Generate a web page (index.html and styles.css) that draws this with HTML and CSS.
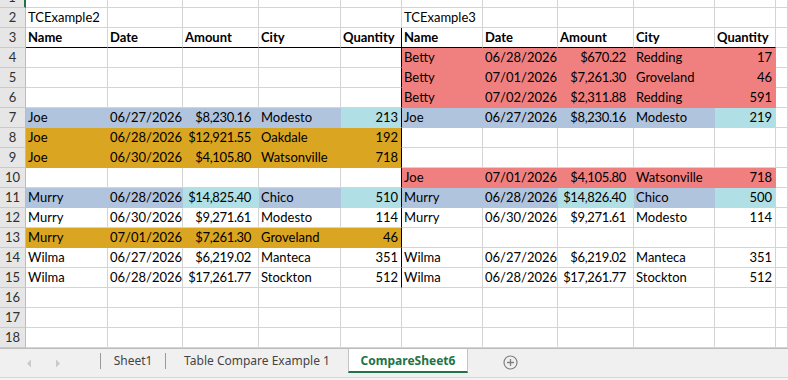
FILE: index.html
```html
<!DOCTYPE html>
<html lang="en">
<head>
  <meta charset="UTF-8" />
  <title>CompareSheet6</title>
  <link rel="stylesheet" href="styles.css">
</head>
<body>
  <div class="sheet">
    <div class="row"><div class="rh sel">1</div><div class="c"></div><div class="c"></div><div class="c"></div><div class="c"></div><div class="c"></div><div class="c"></div><div class="c"></div><div class="c"></div><div class="c"></div><div class="c"></div><div class="c"></div></div>
    <div class="row"><div class="rh">2</div><div class="c">TCExample2</div><div class="c"></div><div class="c"></div><div class="c"></div><div class="c"></div><div class="c">TCExample3</div><div class="c"></div><div class="c"></div><div class="c"></div><div class="c"></div><div class="c"></div></div>
    <div class="row"><div class="rh">3</div><div class="c hd">Name</div><div class="c hd">Date</div><div class="c hd">Amount</div><div class="c hd">City</div><div class="c hd edge">Quantity</div><div class="c hd">Name</div><div class="c hd">Date</div><div class="c hd">Amount</div><div class="c hd">City</div><div class="c hd">Quantity</div><div class="c"></div></div>

    <div class="row"><div class="rh">4</div><div class="c"></div><div class="c"></div><div class="c"></div><div class="c"></div><div class="c edge"></div>
      <div class="c rd">Betty</div><div class="c d rd">06/28/2026</div><div class="c m rd">$670.22</div><div class="c rd">Redding</div><div class="c n rd">17</div><div class="c"></div></div>
    <div class="row"><div class="rh">5</div><div class="c"></div><div class="c"></div><div class="c"></div><div class="c"></div><div class="c edge"></div>
      <div class="c rd">Betty</div><div class="c d rd">07/01/2026</div><div class="c m rd">$7,261.30</div><div class="c rd">Groveland</div><div class="c n rd">46</div><div class="c"></div></div>
    <div class="row"><div class="rh">6</div><div class="c"></div><div class="c"></div><div class="c"></div><div class="c"></div><div class="c edge"></div>
      <div class="c rd">Betty</div><div class="c d rd">07/02/2026</div><div class="c m rd">$2,311.88</div><div class="c rd">Redding</div><div class="c n rd">591</div><div class="c"></div></div>
    <div class="row"><div class="rh">7</div><div class="c bl">Joe</div><div class="c d bl">06/27/2026</div><div class="c m bl">$8,230.16</div><div class="c bl">Modesto</div><div class="c n cy edge">213</div>
      <div class="c bl">Joe</div><div class="c d bl">06/27/2026</div><div class="c m bl">$8,230.16</div><div class="c bl">Modesto</div><div class="c n cy">219</div><div class="c"></div></div>
    <div class="row"><div class="rh">8</div><div class="c go">Joe</div><div class="c d go">06/28/2026</div><div class="c m go">$12,921.55</div><div class="c go">Oakdale</div><div class="c n go edge">192</div>
      <div class="c"></div><div class="c"></div><div class="c"></div><div class="c"></div><div class="c"></div><div class="c"></div></div>
    <div class="row"><div class="rh">9</div><div class="c go">Joe</div><div class="c d go">06/30/2026</div><div class="c m go">$4,105.80</div><div class="c go">Watsonville</div><div class="c n go edge">718</div>
      <div class="c"></div><div class="c"></div><div class="c"></div><div class="c"></div><div class="c"></div><div class="c"></div></div>
    <div class="row"><div class="rh">10</div><div class="c"></div><div class="c"></div><div class="c"></div><div class="c"></div><div class="c edge"></div>
      <div class="c rd">Joe</div><div class="c d rd">07/01/2026</div><div class="c m rd">$4,105.80</div><div class="c rd">Watsonville</div><div class="c n rd">718</div><div class="c"></div></div>
    <div class="row"><div class="rh">11</div><div class="c bl">Murry</div><div class="c d bl">06/28/2026</div><div class="c m cy">$14,825.40</div><div class="c bl">Chico</div><div class="c n cy edge">510</div>
      <div class="c bl">Murry</div><div class="c d bl">06/28/2026</div><div class="c m cy">$14,826.40</div><div class="c bl">Chico</div><div class="c n cy">500</div><div class="c"></div></div>
    <div class="row"><div class="rh">12</div><div class="c">Murry</div><div class="c d">06/30/2026</div><div class="c m">$9,271.61</div><div class="c">Modesto</div><div class="c n edge">114</div>
      <div class="c">Murry</div><div class="c d">06/30/2026</div><div class="c m">$9,271.61</div><div class="c">Modesto</div><div class="c n">114</div><div class="c"></div></div>
    <div class="row"><div class="rh">13</div><div class="c go">Murry</div><div class="c d go">07/01/2026</div><div class="c m go">$7,261.30</div><div class="c go">Groveland</div><div class="c n go edge">46</div>
      <div class="c"></div><div class="c"></div><div class="c"></div><div class="c"></div><div class="c"></div><div class="c"></div></div>
    <div class="row"><div class="rh">14</div><div class="c">Wilma</div><div class="c d">06/27/2026</div><div class="c m">$6,219.02</div><div class="c">Manteca</div><div class="c n edge">351</div>
      <div class="c">Wilma</div><div class="c d">06/27/2026</div><div class="c m">$6,219.02</div><div class="c">Manteca</div><div class="c n">351</div><div class="c"></div></div>
    <div class="row"><div class="rh">15</div><div class="c">Wilma</div><div class="c d">06/28/2026</div><div class="c m">$17,261.77</div><div class="c">Stockton</div><div class="c n edge">512</div>
      <div class="c">Wilma</div><div class="c d">06/28/2026</div><div class="c m">$17,261.77</div><div class="c">Stockton</div><div class="c n">512</div><div class="c"></div></div>

    <div class="row"><div class="rh">16</div><div class="c"></div><div class="c"></div><div class="c"></div><div class="c"></div><div class="c"></div><div class="c"></div><div class="c"></div><div class="c"></div><div class="c"></div><div class="c"></div><div class="c"></div></div>
    <div class="row"><div class="rh">17</div><div class="c"></div><div class="c"></div><div class="c"></div><div class="c"></div><div class="c"></div><div class="c"></div><div class="c"></div><div class="c"></div><div class="c"></div><div class="c"></div><div class="c"></div></div>
    <div class="row"><div class="rh">18</div><div class="c"></div><div class="c"></div><div class="c"></div><div class="c"></div><div class="c"></div><div class="c"></div><div class="c"></div><div class="c"></div><div class="c"></div><div class="c"></div><div class="c"></div></div>
  </div>

  <div class="tabs">
    <div class="nav">
      <svg width="6" height="9" viewBox="0 0 6 9"><path d="M5 0.5 L1 4.5 L5 8.5 Z" fill="#c9c9c9"/></svg>
      <svg width="6" height="9" viewBox="0 0 6 9"><path d="M1 0.5 L5 4.5 L1 8.5 Z" fill="#c9c9c9"/></svg>
    </div>
    <div class="sep"></div>
    <div class="tab tab-sheet1">Sheet1</div>
    <div class="sep"></div>
    <div class="tab tab-compare">Table Compare Example 1</div>
    <div class="tab active">CompareSheet6</div>
    <div class="add">
      <svg width="15" height="15" viewBox="0 0 15 15"><circle cx="7.5" cy="7.5" r="6.5" fill="none" stroke="#808080" stroke-width="1.2"/><path d="M7.5 4 V11 M4 7.5 H11" stroke="#808080" stroke-width="1.3"/></svg>
    </div>
  </div>
  <div class="status"></div>
</body>
</html>
```

FILE: styles.css
```css
body {
  margin: 0;
  width: 788px;
  height: 380px;
  overflow: hidden;
  background: #fff;
  font-family: 'Lato', 'Liberation Sans', sans-serif;
  font-size: 13px;
  color: #000;
}

/* scrolled so that only the bottom of row 1 shows */
.sheet {
  margin-top: -12px;
}

.row {
  display: grid;
  grid-template-columns: 26px 82px 75px 76px 82px 61px 81px 75px 76px 81px 61px 1fr;
  height: 20px;
}

.rh {
  background: #e6e6e6;
  border-right: 1px solid #bcbcbc;
  border-bottom: 1px solid #cacaca;
  text-align: center;
  line-height: 19px;
  color: #303030;
}

.rh.sel {
  border-right: 2px solid #217346;
}

.c {
  border-right: 1px solid #d4d4d4;
  border-bottom: 1px solid #d4d4d4;
  padding: 0 2px;
  line-height: 19px;
  white-space: nowrap;
  overflow: hidden;
}

.d, .m, .n {
  text-align: right;
}

.d { padding-right: 2px; }
.m { padding-right: 7px; letter-spacing: -0.35px; }
.n { padding-right: 3px; }

.hd {
  font-weight: bold;
  border-bottom-color: #000;
}

/* cell fills hide the grid lines */
.bl { background: #b0c4de; border-color: #b0c4de; }
.cy { background: #b0e0e6; border-color: #b0e0e6; }
.go { background: #daa520; border-color: #daa520; }
.rd { background: #f08080; border-color: #f08080; }

.edge {
  border-right-color: #000;
}

.tabs {
  display: flex;
  height: 28px;
  background: #f0f0f0;
  border-top: 1px solid #bcbcbc;
  border-bottom: 1px solid #d6d6d6;
  font-family: 'Noto Sans', 'Liberation Sans', sans-serif;
  font-size: 12px;
  color: #444;
}

.nav {
  width: 100px;
  display: flex;
  align-items: center;
  gap: 23px;
  padding-left: 26px;
  box-sizing: border-box;
}

.sep {
  width: 1px;
  height: 16px;
  margin-top: 4px;
  background: #9a9a9a;
}

.tab {
  line-height: 23px;
  text-align: center;
}

.tab-sheet1 { width: 64px; }
.tab-compare { width: 182px; }

.tab.active {
  width: 118px;
  height: 22px;
  background: #fff;
  border-left: 1px solid #c4c4c4;
  border-right: 1px solid #c4c4c4;
  border-bottom: 2px solid #217346;
  color: #217346;
  font-weight: bold;
}

.add {
  display: flex;
  align-items: center;
  height: 26px;
  margin-left: 35px;
}

.status {
  height: 3px;
  background: #f4f4f4;
}
```
